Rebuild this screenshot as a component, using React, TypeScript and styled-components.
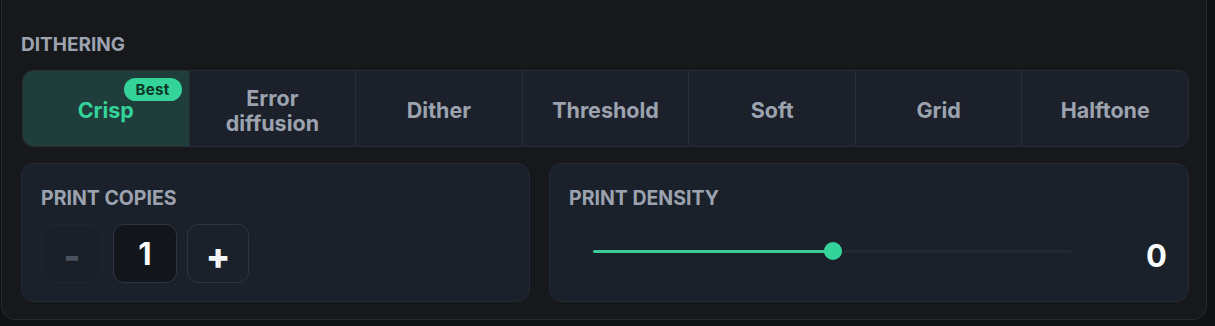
import styled, { createGlobalStyle } from "styled-components";

const modes = ["Crisp", "Error diffusion", "Dither", "Threshold", "Soft", "Grid", "Halftone"];

const GlobalStyle = createGlobalStyle`
  html, body {
    margin: 0;
    padding: 0;
    background: #101114;
  }
  body {
    font-family: Inter, "Noto Sans", sans-serif;
    -webkit-font-smoothing: antialiased;
  }
`;

export default function App() {
  const density = 0;
  const min = -5;
  const max = 5;
  const pct = ((density - min) / (max - min)) * 100;

  return (
    <>
      <GlobalStyle />
      <Panel>
        <SectionLabel>Dithering</SectionLabel>
        <Segmented>
          {modes.map((m, i) => (
            <Segment key={m} $active={i === 0}>
              {m}
              {i === 0 && <Badge>Best</Badge>}
            </Segment>
          ))}
        </Segmented>
        <CardRow>
          <Card>
            <CardLabel>Print copies</CardLabel>
            <Stepper>
              <StepButton disabled>-</StepButton>
              <CountBox>1</CountBox>
              <StepButton>+</StepButton>
            </Stepper>
          </Card>
          <Card>
            <CardLabel>Print density</CardLabel>
            <SliderRow>
              <Track>
                <Fill style={{ width: `${pct}%` }} />
                <Thumb style={{ left: `${pct}%` }} />
              </Track>
              <Value>{density}</Value>
            </SliderRow>
          </Card>
        </CardRow>
      </Panel>
    </>
  );
}

const Panel = styled.div`
  box-sizing: border-box;
  width: 1206px;
  margin-left: 1px;
  padding: 32px 17px 17px 19px;
  background: #16181c;
  border: 1px solid #25282e;
  border-top: none;
  border-radius: 0 0 14px 14px;
`;

const SectionLabel = styled.div`
  font-size: 19px;
  font-weight: 700;
  text-transform: uppercase;
  color: #9ca3af;
  line-height: 26px;
  margin-bottom: 12px;
`;

const Segmented = styled.div`
  display: flex;
  height: 77px;
  box-sizing: border-box;
  margin-left: 1px;
  border: 1px solid #272c35;
  border-radius: 11px;
  background: #1b202a;
  overflow: hidden;
`;

const Segment = styled.div<{ $active?: boolean }>`
  position: relative;
  flex: 1;
  display: flex;
  align-items: center;
  justify-content: center;
  text-align: center;
  padding: 4px 14px 0;
  font-size: 21.5px;
  font-weight: 700;
  line-height: 25px;
  color: ${(p) => (p.$active ? "#34d399" : "#9ca3af")};
  background: ${(p) => (p.$active ? "#1f3d3a" : "transparent")};
  & + & {
    border-left: 1px solid #272c35;
  }
`;

const Badge = styled.span`
  position: absolute;
  top: 7px;
  right: 7px;
  padding: 0 12px;
  height: 23px;
  line-height: 23px;
  border-radius: 12px;
  background: #34d399;
  color: #0c3626;
  font-size: 15px;
  font-weight: 700;
  letter-spacing: 0.3px;
`;

const CardRow = styled.div`
  display: grid;
  grid-template-columns: 509px 1fr;
  gap: 19px;
  margin-top: 16px;
`;

const Card = styled.div`
  box-sizing: border-box;
  height: 139px;
  padding: 21px 21px 18px 19px;
  background: #1b212b;
  border: 1px solid #252b34;
  border-radius: 13px;
  display: flex;
  flex-direction: column;
`;

const CardLabel = styled.div`
  font-size: 19.5px;
  font-weight: 700;
  text-transform: uppercase;
  color: #9ca3af;
  line-height: 26px;
`;

const Stepper = styled.div`
  display: flex;
  gap: 10px;
  margin-top: auto;
`;

const StepButton = styled.button`
  box-sizing: border-box;
  width: 62px;
  height: 59px;
  border-radius: 11px;
  border: 1px solid #2f3540;
  background: #1b212b;
  color: #f3f4f6;
  font-family: Inter, sans-serif;
  font-size: 36px;
  font-weight: 800;
  display: flex;
  align-items: center;
  justify-content: center;
  padding: 4px 0 0;
  &:disabled {
    border-color: #1f242d;
    background: #1a1f28;
    color: #4a525e;
  }
`;

const CountBox = styled.div`
  box-sizing: border-box;
  width: 64px;
  height: 59px;
  border-radius: 11px;
  border: 1px solid #2f3540;
  background: #12151a;
  color: #f9fafb;
  font-size: 31px;
  font-weight: 700;
  display: flex;
  align-items: center;
  justify-content: center;
`;

const SliderRow = styled.div`
  display: flex;
  align-items: center;
  margin-top: auto;
  margin-bottom: 3px;
  height: 58px;
  padding-left: 24px;
  gap: 22px;
`;

const Track = styled.div`
  position: relative;
  flex: 1;
  height: 3px;
  border-radius: 2px;
  background: #212733;
`;

const Fill = styled.div`
  height: 100%;
  border-radius: 2px;
  background: #3fcb96;
`;

const Thumb = styled.div`
  position: absolute;
  top: 50%;
  width: 18px;
  height: 18px;
  border-radius: 50%;
  background: #34d399;
  transform: translate(-50%, -50%);
`;

const Value = styled.div`
  width: 72px;
  text-align: right;
  font-size: 31px;
  font-weight: 700;
  line-height: 1;
  padding-top: 8px;
  color: #f9fafb;
`;
